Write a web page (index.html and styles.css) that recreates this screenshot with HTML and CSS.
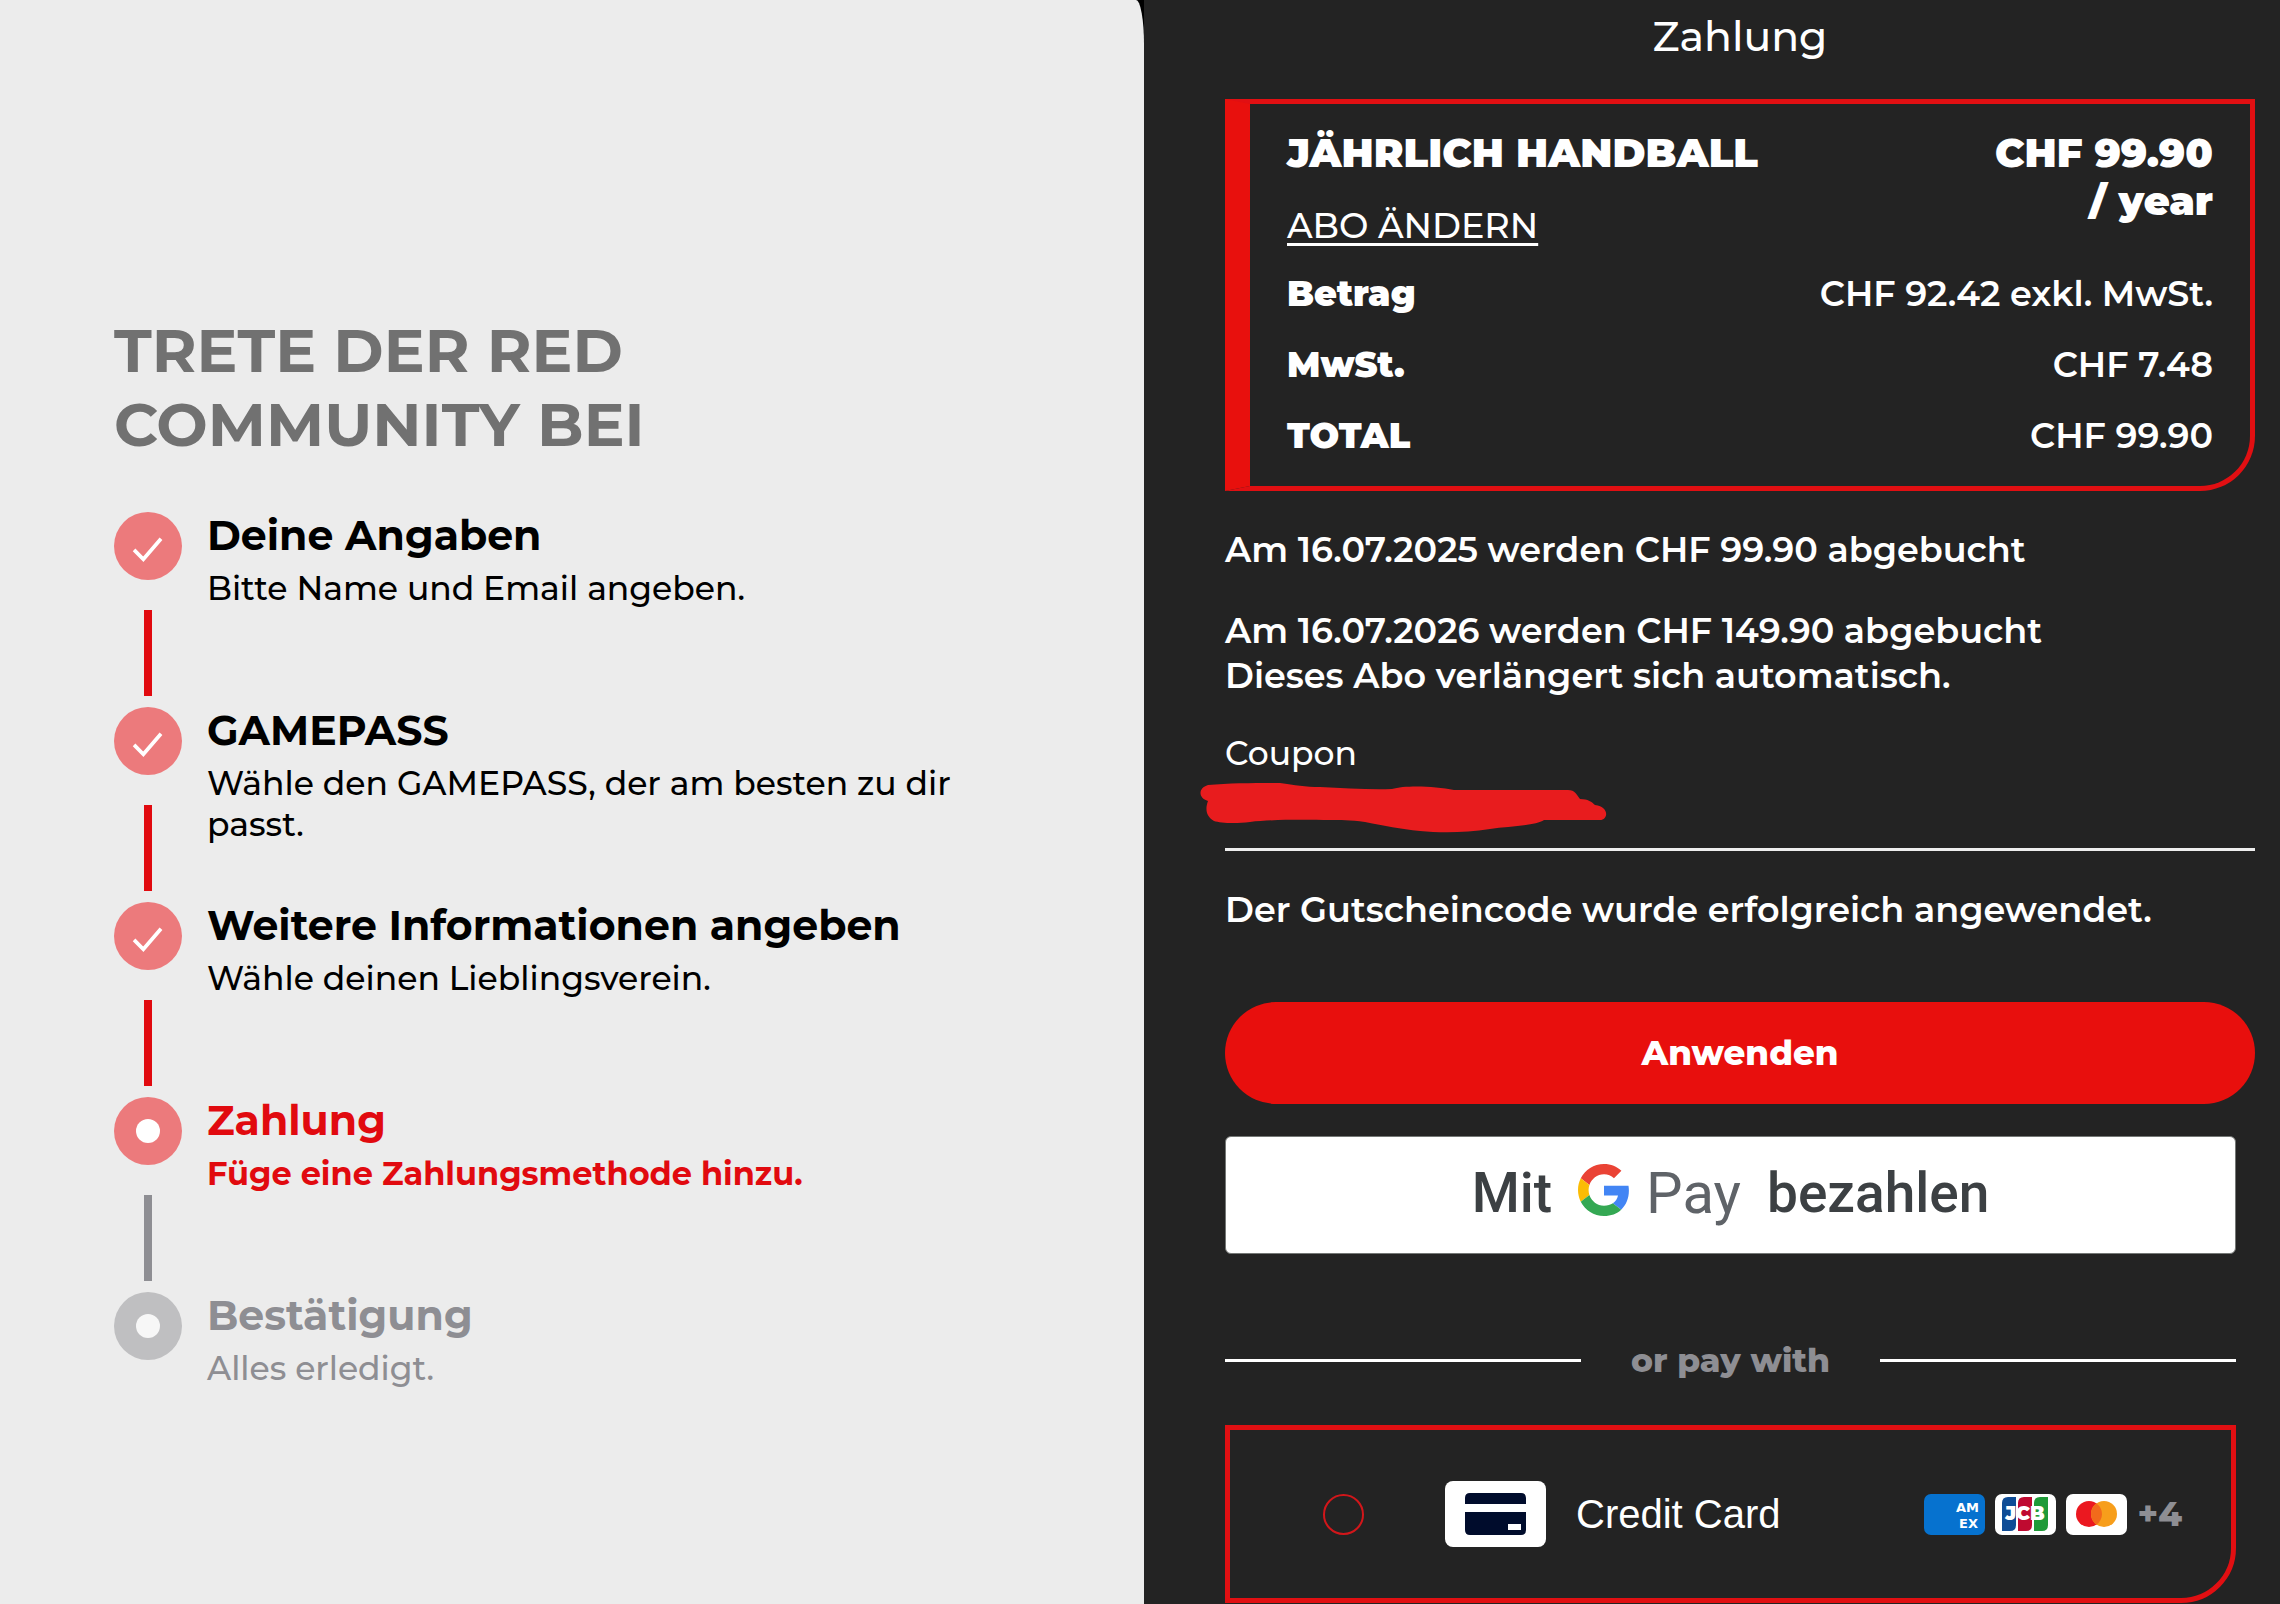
FILE: index.html
```html
<!DOCTYPE html>
<html lang="de">
<head>
<meta charset="utf-8">
<meta name="viewport" content="width=device-width, initial-scale=1">
<title>Zahlung</title>
<link rel="stylesheet" href="styles.css">
</head>
<body>
<div class="layout">
  <aside class="progress">
    <h1 class="progress-title">TRETE DER RED<br>COMMUNITY BEI</h1>
    <ol class="steps">
      <li class="step done">
        <span class="dot"><svg class="tick" viewBox="0 0 34 28" aria-hidden="true"><path d="M2 15l10 10L31 3"/></svg></span>
        <div class="step-text"><h2 class="step-title">Deine Angaben</h2><p class="step-note">Bitte Name und Email angeben.</p></div>
      </li>
      <li class="step done">
        <span class="dot"><svg class="tick" viewBox="0 0 34 28" aria-hidden="true"><path d="M2 15l10 10L31 3"/></svg></span>
        <div class="step-text"><h2 class="step-title">GAMEPASS</h2><p class="step-note">Wähle den GAMEPASS, der am besten zu dir passt.</p></div>
      </li>
      <li class="step done">
        <span class="dot"><svg class="tick" viewBox="0 0 34 28" aria-hidden="true"><path d="M2 15l10 10L31 3"/></svg></span>
        <div class="step-text"><h2 class="step-title">Weitere Informationen angeben</h2><p class="step-note">Wähle deinen Lieblingsverein.</p></div>
      </li>
      <li class="step current" aria-current="step">
        <span class="dot"><span class="hole"></span></span>
        <div class="step-text"><h2 class="step-title">Zahlung</h2><p class="step-note">Füge eine Zahlungsmethode hinzu.</p></div>
      </li>
      <li class="step pending">
        <span class="dot"><span class="hole"></span></span>
        <div class="step-text"><h2 class="step-title">Bestätigung</h2><p class="step-note">Alles erledigt.</p></div>
      </li>
    </ol>
  </aside>

  <main class="payment">
    <h2 class="payment-title">Zahlung</h2>

    <section class="summary">
      <div class="summary-head">
        <div class="plan">
          <h3 class="plan-name">JÄHRLICH HANDBALL</h3>
          <a class="plan-change" href="#abo">ABO ÄNDERN</a>
        </div>
        <p class="plan-price">CHF 99.90<br>/ year</p>
      </div>
      <dl class="amounts">
        <div class="amount"><dt>Betrag</dt><dd>CHF 92.42 exkl. MwSt.</dd></div>
        <div class="amount"><dt>MwSt.</dt><dd>CHF 7.48</dd></div>
        <div class="amount"><dt>TOTAL</dt><dd>CHF 99.90</dd></div>
      </dl>
    </section>

    <p class="info">Am 16.07.2025 werden CHF 99.90 abgebucht</p>
    <p class="info">Am 16.07.2026 werden CHF 149.90 abgebucht<br>Dieses Abo verlängert sich automatisch.</p>

    <form class="coupon">
      <label class="coupon-label" for="coupon">Coupon</label>
      <div class="coupon-field">
        <input class="coupon-input" id="coupon" type="text">
        <svg class="scribble" viewBox="0 0 408 54" aria-hidden="true"><path d="M8 2C30 0 60 0 80 0C95 2 105 4 120 4C145 5 170 7 192 6C205 2 235 3 254 7L368 7C375 7 377 12 380 16C388 16 392 19 395 22C410 24 408 37 400 37L344 37C335 43 310 43 290 46C265 50 240 50 220 48C200 46 185 43 165 39C150 37 140 37 130 37C110 37 75 36 50 39C35 41 20 40 14 38C6 33 5 26 8 18C-2 15 -2 5 8 2Z"/></svg>
      </div>
      <p class="info">Der Gutscheincode wurde erfolgreich angewendet.</p>
      <button class="apply" type="button">Anwenden</button>
    </form>

    <div class="methods">
      <button class="gpay" type="button">
        <span>Mit</span>
        <span class="gpay-mark">
          <svg class="google-g" viewBox="0 0 48 48" aria-hidden="true">
            <path fill="#ea4335" d="M24 9.500c3.540 0 6.710 1.220 9.210 3.600l6.850-6.850C35.900 2.380 30.470 0 24 0 14.620 0 6.510 5.380 2.560 13.220l7.980 6.190C12.430 13.720 17.740 9.500 24 9.500z"/>
            <path fill="#4285f4" d="M46.980 24.550c0-1.570-.15-3.090-.38-4.550H24v9.020h12.940c-.58 2.960-2.260 5.480-4.780 7.180l7.730 6c4.510-4.180 7.090-10.360 7.090-17.650z"/>
            <path fill="#fbbc05" d="M10.530 28.590c-.48-1.450-.76-2.990-.76-4.590s.27-3.140.76-4.590l-7.980-6.190C.92 16.460 0 20.120 0 24s.92 7.540 2.560 10.780l7.970-6.190z"/>
            <path fill="#34a853" d="M24 48c6.480 0 11.930-2.130 15.890-5.810l-7.730-6c-2.150 1.450-4.920 2.300-8.160 2.300-6.260 0-11.570-4.220-13.470-9.910l-7.980 6.190C6.510 42.620 14.620 48 24 48z"/>
          </svg>
          <span class="gpay-word">Pay</span>
        </span>
        <span>bezahlen</span>
      </button>

      <div class="divider">or pay with</div>

      <label class="method">
        <input class="method-radio" type="radio" name="method">
        <svg class="card-icon" viewBox="0 0 101 66" aria-hidden="true">
          <rect width="101" height="66" rx="8" fill="#fff"/>
          <path fill="#000c2c" d="M25 12h51q5 0 5 5v6H20v-6q0-5 5-5zM20 31h61v18q0 5-5 5H25q-5 0-5-5z"/>
          <path fill="#fff" d="M63 43h13v6H63z"/>
        </svg>
        <span class="method-name">Credit Card</span>
        <span class="brands">
          <svg class="brand" viewBox="0 0 61 41" role="img" aria-label="American Express">
            <rect width="61" height="41" rx="7" fill="#0672cf"/>
            <text class="amex" x="32" y="18">AM</text>
            <text class="amex" x="35" y="34">EX</text>
          </svg>
          <svg class="brand" viewBox="0 0 61 41" role="img" aria-label="JCB">
            <rect width="61" height="41" rx="7" fill="#fff"/>
            <path fill="#0e4c96" d="M13 3h8v28q0 6-6 6H7V9q0-6 6-6z"/>
            <path fill="#bf0a30" d="M29 3h8v28q0 6-6 6h-8V9q0-6 6-6z"/>
            <path fill="#1f9a38" d="M45 3h8v28q0 6-6 6h-8V9q0-6 6-6z"/>
            <text class="jcb" x="30" y="26">JCB</text>
          </svg>
          <svg class="brand" viewBox="0 0 61 41" role="img" aria-label="Mastercard">
            <rect width="61" height="41" rx="7" fill="#fff"/>
            <circle cx="23" cy="20" r="13" fill="#eb1820"/>
            <circle cx="38" cy="20" r="13" fill="#f79e1b"/>
            <path fill="#f26a1b" d="M30.500 9.400a13 13 0 0 1 0 21.200a13 13 0 0 1 0-21.200z"/>
          </svg>
          <span class="more">+4</span>
        </span>
      </label>
    </div>
  </main>
</div>
</body>
</html>
```
FILE: styles.css
```css
* { box-sizing: border-box; }

body {
  margin: 0;
  background: #000;
  color: #fff;
  font-family: Montserrat, Inter, "Liberation Sans", sans-serif;
}

h1, h2, h3, p, dl, dd, ol { margin: 0; padding: 0; }

.layout {
  display: grid;
  grid-template-columns: 1144fr 1136fr;
  min-height: 100vh;
}

/* Progress column */
.progress {
  background: #ececec;
  color: #000;
  padding: 313px 180px 100px 114px;
  border-top-right-radius: 8px 44px;
}

.progress-title {
  color: #717171;
  font-size: 61px;
  font-weight: 700;
  line-height: 74px;
  margin-bottom: 51px;
}

.steps { list-style: none; }

.step {
  display: grid;
  grid-template-columns: 68px 1fr;
  grid-template-rows: 68px 86px;
  column-gap: 25px;
  row-gap: 30px;
  padding-bottom: 11px;
}

.step:not(:last-child)::after {
  content: "";
  grid-column: 1;
  grid-row: 2;
  width: 8px;
  justify-self: center;
  background: #e10a0f;
}

.step.current::after { background: #8e8e93; }

.dot {
  grid-column: 1;
  grid-row: 1;
  display: flex;
  align-items: center;
  justify-content: center;
  border-radius: 50%;
  background: #ec7a7c;
}

.pending .dot { background: #bfbfc1; }

.tick {
  width: 32px;
  height: 26px;
  margin-top: 5px;
  fill: none;
  stroke: #fff;
  stroke-width: 4;
}

.hole {
  width: 24px;
  height: 24px;
  border-radius: 50%;
  background: #fff;
}

.pending .hole { background: #f7f7f7; }

.step-text { grid-column: 2; grid-row: 1 / 3; }

.step-title {
  font-size: 41px;
  font-weight: 700;
  line-height: 46px;
  margin-bottom: 10px;
}

.step-note {
  font-size: 33px;
  font-weight: 500;
  line-height: 41px;
}

.current .step-text { color: #e10a0f; }
.current .step-note { font-size: 32px; font-weight: 700; }
.pending .step-text { color: #8e8e93; }

/* Payment column */
.payment {
  background: #232323;
  padding: 11px 25px 0 81px;
  font-size: 35px;
  font-weight: 500;
}

.payment-title {
  font-size: 41px;
  font-weight: 500;
  line-height: 50px;
  text-align: center;
  margin-bottom: 38px;
}

.summary {
  border: 5px solid #e10f12;
  border-left: 25px solid #e8100d;
  border-bottom-right-radius: 55px;
  padding: 25px 37px 28px 37px;
  margin-bottom: 36px;
  line-height: 44px;
}

.summary-head {
  display: flex;
  justify-content: space-between;
  margin-bottom: 24px;
}

.plan { display: flex; flex-direction: column; align-items: flex-start; gap: 27px; }

.plan-name, .plan-price {
  font-size: 40px;
  font-weight: 900;
  line-height: 48px;
}

.plan-price { text-align: right; }

.plan-change {
  color: #fff;
  text-decoration-thickness: 3px;
  text-underline-offset: 5px;
}

.amounts { display: flex; flex-direction: column; gap: 27px; }
.amount { display: flex; justify-content: space-between; }
.amount dt { font-weight: 900; }
.amount dd { font-weight: 600; }

.info { font-weight: 600; line-height: 45px; margin-bottom: 36px; }

.coupon-label {
  display: block;
  font-size: 33px;
  line-height: 38px;
}

.coupon-field { position: relative; margin-bottom: 36px; }

.coupon-input {
  display: block;
  width: 100%;
  height: 79px;
  padding: 0;
  border: 0;
  border-bottom: 3px solid #eee;
  background: transparent;
  color: #fff;
  font: inherit;
}

.scribble {
  position: absolute;
  left: -25px;
  top: 11px;
  width: 408px;
  height: 54px;
  fill: #e81c1e;
}

.apply {
  display: block;
  width: 100%;
  height: 102px;
  margin-top: 70px;
  border: 0;
  border-radius: 51px;
  background: #e80f0d;
  color: #fff;
  font: inherit;
  font-size: 34px;
  font-weight: 800;
}

.methods { margin: 32px 19px 0 0; }

.gpay {
  display: flex;
  align-items: center;
  justify-content: center;
  gap: 26px;
  width: 100%;
  height: 118px;
  padding: 0 0 4px;
  border: 1px solid #747775;
  border-radius: 6px;
  background: #fff;
  color: #3c4043;
  font-family: "Google Sans", Roboto, sans-serif;
  font-size: 55px;
  font-weight: 500;
  line-height: 74px;
}

.gpay-mark { display: flex; align-items: center; gap: 16px; }
.google-g { width: 52px; height: 52px; margin-bottom: 6px; }

.gpay-word {
  color: #5f6368;
  font-size: 58px;
  font-weight: 400;
}

.divider {
  display: flex;
  align-items: center;
  gap: 50px;
  margin: 86px 0 45px;
  color: #8e8e93;
  font-size: 33px;
  font-weight: 800;
  line-height: 40px;
}

.divider::before, .divider::after {
  content: "";
  flex: 1;
  height: 3px;
  background: #fff;
}

.method {
  display: flex;
  align-items: center;
  height: 178px;
  padding: 0 49px 0 93px;
  border: 5px solid #e10f12;
  border-bottom-right-radius: 55px;
}

.method-radio {
  appearance: none;
  width: 41px;
  height: 41px;
  margin: 0 81px 0 0;
  border: 2px solid #d2161a;
  border-radius: 50%;
}

.card-icon { width: 101px; height: 66px; }

.method-name {
  margin-left: 30px;
  font-family: "Liberation Sans", Arial, sans-serif;
  font-size: 40px;
  font-weight: 400;
}

.brands {
  display: flex;
  align-items: center;
  gap: 10px;
  margin-left: auto;
}

.brand { width: 61px; height: 41px; }

.amex {
  fill: #fff;
  font-family: "DejaVu Sans", sans-serif;
  font-size: 13px;
  font-weight: 700;
}

.jcb {
  fill: #fff;
  font-size: 19px;
  font-weight: 900;
  text-anchor: middle;
}

.more {
  color: #8e8e93;
  font-size: 34px;
  font-weight: 800;
}
```
